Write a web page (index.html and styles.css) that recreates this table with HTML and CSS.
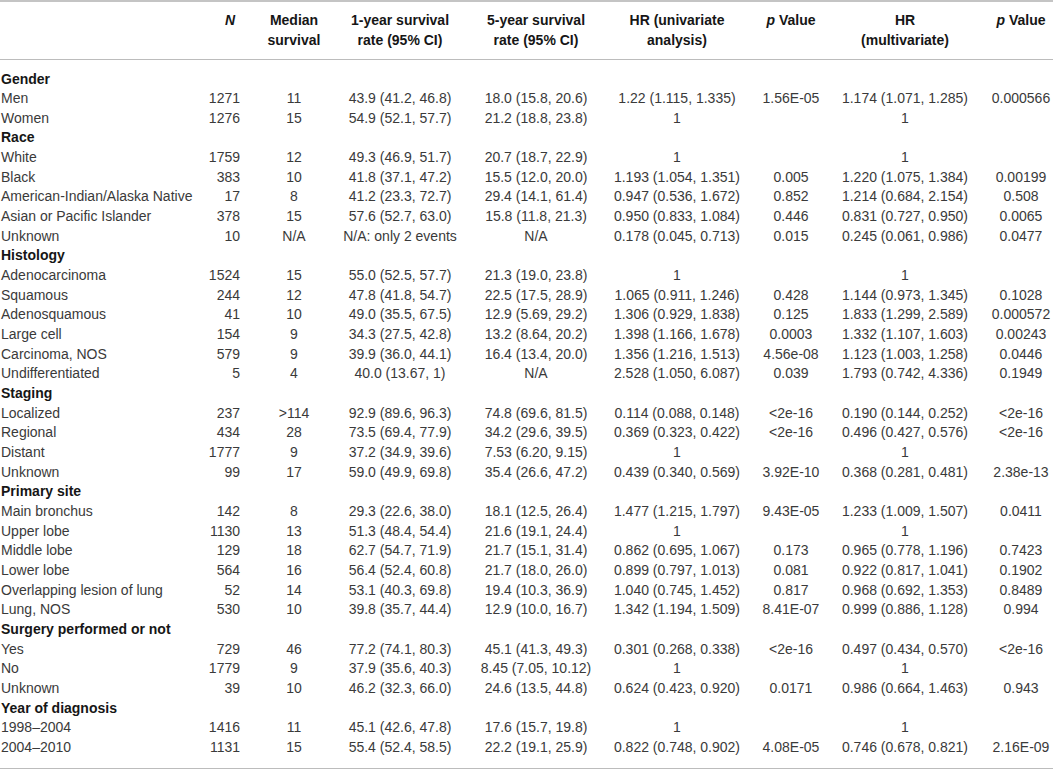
FILE: index.html
```html
<!DOCTYPE html>
<html>
<head>
<meta charset="utf-8">
<link rel="stylesheet" href="styles.css">
</head>
<body>
<table class="tbl">
<colgroup>
<col class="c-label"><col class="c-n"><col class="c-med"><col class="c-1y"><col class="c-5y"><col class="c-hru"><col class="c-p"><col class="c-hrm"><col class="c-p2">
</colgroup>
<thead>
<tr>
<th class="lab"></th>
<th class="n"><i>N</i></th>
<th>Median<br>survival</th>
<th>1-year survival<br>rate (95% CI)</th>
<th>5-year survival<br>rate (95% CI)</th>
<th>HR (univariate<br>analysis)</th>
<th><i>p</i> Value</th>
<th>HR<br>(multivariate)</th>
<th class="last"><i>p</i> Value</th>
</tr>
</thead>
<tbody>
<tr class="sec first"><td colspan="9">Gender</td></tr>
<tr><td>Men</td><td>1271</td><td>11</td><td>43.9 (41.2, 46.8)</td><td>18.0 (15.8, 20.6)</td><td>1.22 (1.115, 1.335)</td><td>1.56E-05</td><td>1.174 (1.071, 1.285)</td><td>0.000566</td></tr>
<tr><td>Women</td><td>1276</td><td>15</td><td>54.9 (52.1, 57.7)</td><td>21.2 (18.8, 23.8)</td><td>1</td><td></td><td>1</td><td></td></tr>
<tr class="sec"><td colspan="9">Race</td></tr>
<tr><td>White</td><td>1759</td><td>12</td><td>49.3 (46.9, 51.7)</td><td>20.7 (18.7, 22.9)</td><td>1</td><td></td><td>1</td><td></td></tr>
<tr><td>Black</td><td>383</td><td>10</td><td>41.8 (37.1, 47.2)</td><td>15.5 (12.0, 20.0)</td><td>1.193 (1.054, 1.351)</td><td>0.005</td><td>1.220 (1.075, 1.384)</td><td>0.00199</td></tr>
<tr><td>American-Indian/Alaska Native</td><td>17</td><td>8</td><td>41.2 (23.3, 72.7)</td><td>29.4 (14.1, 61.4)</td><td>0.947 (0.536, 1.672)</td><td>0.852</td><td>1.214 (0.684, 2.154)</td><td>0.508</td></tr>
<tr><td>Asian or Pacific Islander</td><td>378</td><td>15</td><td>57.6 (52.7, 63.0)</td><td>15.8 (11.8, 21.3)</td><td>0.950 (0.833, 1.084)</td><td>0.446</td><td>0.831 (0.727, 0.950)</td><td>0.0065</td></tr>
<tr><td>Unknown</td><td>10</td><td>N/A</td><td>N/A: only 2 events</td><td>N/A</td><td>0.178 (0.045, 0.713)</td><td>0.015</td><td>0.245 (0.061, 0.986)</td><td>0.0477</td></tr>
<tr class="sec"><td colspan="9">Histology</td></tr>
<tr><td>Adenocarcinoma</td><td>1524</td><td>15</td><td>55.0 (52.5, 57.7)</td><td>21.3 (19.0, 23.8)</td><td>1</td><td></td><td>1</td><td></td></tr>
<tr><td>Squamous</td><td>244</td><td>12</td><td>47.8 (41.8, 54.7)</td><td>22.5 (17.5, 28.9)</td><td>1.065 (0.911, 1.246)</td><td>0.428</td><td>1.144 (0.973, 1.345)</td><td>0.1028</td></tr>
<tr><td>Adenosquamous</td><td>41</td><td>10</td><td>49.0 (35.5, 67.5)</td><td>12.9 (5.69, 29.2)</td><td>1.306 (0.929, 1.838)</td><td>0.125</td><td>1.833 (1.299, 2.589)</td><td>0.000572</td></tr>
<tr><td>Large cell</td><td>154</td><td>9</td><td>34.3 (27.5, 42.8)</td><td>13.2 (8.64, 20.2)</td><td>1.398 (1.166, 1.678)</td><td>0.0003</td><td>1.332 (1.107, 1.603)</td><td>0.00243</td></tr>
<tr><td>Carcinoma, NOS</td><td>579</td><td>9</td><td>39.9 (36.0, 44.1)</td><td>16.4 (13.4, 20.0)</td><td>1.356 (1.216, 1.513)</td><td>4.56e-08</td><td>1.123 (1.003, 1.258)</td><td>0.0446</td></tr>
<tr><td>Undifferentiated</td><td>5</td><td>4</td><td>40.0 (13.67, 1)</td><td>N/A</td><td>2.528 (1.050, 6.087)</td><td>0.039</td><td>1.793 (0.742, 4.336)</td><td>0.1949</td></tr>
<tr class="sec"><td colspan="9">Staging</td></tr>
<tr><td>Localized</td><td>237</td><td>&gt;114</td><td>92.9 (89.6, 96.3)</td><td>74.8 (69.6, 81.5)</td><td>0.114 (0.088, 0.148)</td><td>&lt;2e-16</td><td>0.190 (0.144, 0.252)</td><td>&lt;2e-16</td></tr>
<tr><td>Regional</td><td>434</td><td>28</td><td>73.5 (69.4, 77.9)</td><td>34.2 (29.6, 39.5)</td><td>0.369 (0.323, 0.422)</td><td>&lt;2e-16</td><td>0.496 (0.427, 0.576)</td><td>&lt;2e-16</td></tr>
<tr><td>Distant</td><td>1777</td><td>9</td><td>37.2 (34.9, 39.6)</td><td>7.53 (6.20, 9.15)</td><td>1</td><td></td><td>1</td><td></td></tr>
<tr><td>Unknown</td><td>99</td><td>17</td><td>59.0 (49.9, 69.8)</td><td>35.4 (26.6, 47.2)</td><td>0.439 (0.340, 0.569)</td><td>3.92E-10</td><td>0.368 (0.281, 0.481)</td><td>2.38e-13</td></tr>
<tr class="sec"><td colspan="9">Primary site</td></tr>
<tr><td>Main bronchus</td><td>142</td><td>8</td><td>29.3 (22.6, 38.0)</td><td>18.1 (12.5, 26.4)</td><td>1.477 (1.215, 1.797)</td><td>9.43E-05</td><td>1.233 (1.009, 1.507)</td><td>0.0411</td></tr>
<tr><td>Upper lobe</td><td>1130</td><td>13</td><td>51.3 (48.4, 54.4)</td><td>21.6 (19.1, 24.4)</td><td>1</td><td></td><td>1</td><td></td></tr>
<tr><td>Middle lobe</td><td>129</td><td>18</td><td>62.7 (54.7, 71.9)</td><td>21.7 (15.1, 31.4)</td><td>0.862 (0.695, 1.067)</td><td>0.173</td><td>0.965 (0.778, 1.196)</td><td>0.7423</td></tr>
<tr><td>Lower lobe</td><td>564</td><td>16</td><td>56.4 (52.4, 60.8)</td><td>21.7 (18.0, 26.0)</td><td>0.899 (0.797, 1.013)</td><td>0.081</td><td>0.922 (0.817, 1.041)</td><td>0.1902</td></tr>
<tr><td>Overlapping lesion of lung</td><td>52</td><td>14</td><td>53.1 (40.3, 69.8)</td><td>19.4 (10.3, 36.9)</td><td>1.040 (0.745, 1.452)</td><td>0.817</td><td>0.968 (0.692, 1.353)</td><td>0.8489</td></tr>
<tr><td>Lung, NOS</td><td>530</td><td>10</td><td>39.8 (35.7, 44.4)</td><td>12.9 (10.0, 16.7)</td><td>1.342 (1.194, 1.509)</td><td>8.41E-07</td><td>0.999 (0.886, 1.128)</td><td>0.994</td></tr>
<tr class="sec"><td colspan="9">Surgery performed or not</td></tr>
<tr><td>Yes</td><td>729</td><td>46</td><td>77.2 (74.1, 80.3)</td><td>45.1 (41.3, 49.3)</td><td>0.301 (0.268, 0.338)</td><td>&lt;2e-16</td><td>0.497 (0.434, 0.570)</td><td>&lt;2e-16</td></tr>
<tr><td>No</td><td>1779</td><td>9</td><td>37.9 (35.6, 40.3)</td><td>8.45 (7.05, 10.12)</td><td>1</td><td></td><td>1</td><td></td></tr>
<tr><td>Unknown</td><td>39</td><td>10</td><td>46.2 (32.3, 66.0)</td><td>24.6 (13.5, 44.8)</td><td>0.624 (0.423, 0.920)</td><td>0.0171</td><td>0.986 (0.664, 1.463)</td><td>0.943</td></tr>
<tr class="sec"><td colspan="9">Year of diagnosis</td></tr>
<tr><td>1998–2004</td><td>1416</td><td>11</td><td>45.1 (42.6, 47.8)</td><td>17.6 (15.7, 19.8)</td><td>1</td><td></td><td>1</td><td></td></tr>
<tr class="final"><td>2004–2010</td><td>1131</td><td>15</td><td>55.4 (52.4, 58.5)</td><td>22.2 (19.1, 25.9)</td><td>0.822 (0.748, 0.902)</td><td>4.08E-05</td><td>0.746 (0.678, 0.821)</td><td>2.16E-09</td></tr>
</tbody>
</table>
</body>
</html>
```
FILE: styles.css
```css
html, body {
  margin: 0;
  padding: 0;
  background: #ffffff;
}

.tbl {
  width: 1053px;
  table-layout: fixed;
  border-collapse: separate;
  border-spacing: 0;
  font-family: "Liberation Sans", Arial, sans-serif;
  font-size: 14px;
  color: #3a3a3a;
}

.c-label { width: 200px; }
.c-n { width: 48px; }
.c-med { width: 92px; }
.c-1y { width: 120px; }
.c-5y { width: 152px; }
.c-hru { width: 130px; }
.c-p { width: 98px; }
.c-hrm { width: 130px; }
.c-p2 { width: 83px; }

.tbl th {
  font-weight: bold;
  color: #161616;
  line-height: 20px;
  padding: 8px 0 9px 0;
  text-align: center;
  vertical-align: top;
  border-top: 2px solid #c4c4c4;
  border-bottom: 1px solid #bcbcbc;
  white-space: nowrap;
}

.tbl th.n {
  text-align: right;
  padding-right: 13px;
}

.tbl th.last,
.tbl td:nth-child(9) {
  padding-left: 19px;
}

.tbl td {
  line-height: 19.65px;
  padding: 0;
  text-align: center;
  white-space: nowrap;
  vertical-align: middle;
}

.tbl td:first-child {
  text-align: left;
  padding-left: 1px;
}

.tbl td:nth-child(2) {
  text-align: right;
  padding-right: 8px;
}

.tbl tr.sec td {
  font-weight: bold;
  color: #161616;
  text-align: left;
}

.tbl tr.first td {
  padding-top: 9.5px;
}

.tbl tr.final td {
  padding-bottom: 10.5px;
  border-bottom: 1px solid #bcbcbc;
}
```
